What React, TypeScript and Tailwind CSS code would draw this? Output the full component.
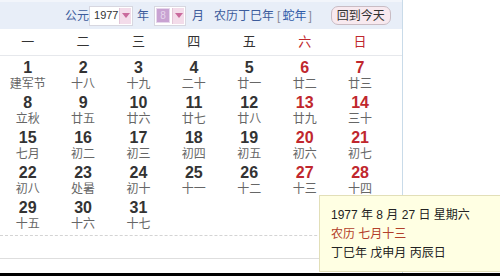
import React from "react";

const font = { fontFamily: '"Liberation Sans", "Noto Sans CJK SC", sans-serif' };

type Day = { d: number; l: string };
const rows: (Day | null)[][] = [
  [
    { d: 1, l: "建军节" },
    { d: 2, l: "十八" },
    { d: 3, l: "十九" },
    { d: 4, l: "二十" },
    { d: 5, l: "廿一" },
    { d: 6, l: "廿二" },
    { d: 7, l: "廿三" },
  ],
  [
    { d: 8, l: "立秋" },
    { d: 9, l: "廿五" },
    { d: 10, l: "廿六" },
    { d: 11, l: "廿七" },
    { d: 12, l: "廿八" },
    { d: 13, l: "廿九" },
    { d: 14, l: "三十" },
  ],
  [
    { d: 15, l: "七月" },
    { d: 16, l: "初二" },
    { d: 17, l: "初三" },
    { d: 18, l: "初四" },
    { d: 19, l: "初五" },
    { d: 20, l: "初六" },
    { d: 21, l: "初七" },
  ],
  [
    { d: 22, l: "初八" },
    { d: 23, l: "处暑" },
    { d: 24, l: "初十" },
    { d: 25, l: "十一" },
    { d: 26, l: "十二" },
    { d: 27, l: "十三" },
    { d: 28, l: "十四" },
  ],
  [
    { d: 29, l: "十五" },
    { d: 30, l: "十六" },
    { d: 31, l: "十七" },
    null,
    null,
    null,
    null,
  ],
];

const weeks = ["一", "二", "三", "四", "五", "六", "日"];

function Arrow() {
  return (
    <div className="w-[12px] h-[16px] bg-[#f3dcea] border-l border-[#e3c6d8] flex items-center justify-center">
      <svg width="8" height="5" viewBox="0 0 8 5">
        <path d="M0 0 L8 0 L4 5 Z" fill="#c96a9c" />
      </svg>
    </div>
  );
}

export default function App() {
  return (
    <div className="relative w-[500px] h-[276px] bg-white overflow-hidden" style={font}>
      <div className="w-[403px] h-[273px] border-r border-[#c9dbe9] flex flex-col">
        {/* header */}
        <div className="h-[29px] bg-[#e8eef8] border-t-2 border-[#f2f5fb] flex items-center pl-[65px] text-[12px] text-[#3d5c9c]">
          <span>公元</span>
          <div className="ml-[0px] w-[44px] h-[20px] bg-white border border-[#d7d7e0] flex items-center justify-between pl-[4px] pr-[1px]">
            <span className="text-[11px] text-[#333]">1977</span>
            <Arrow />
          </div>
          <span className="ml-[4px]">年</span>
          <div className="ml-[5px] w-[32px] h-[20px] bg-white border border-[#d7d7e0] flex items-center justify-between pl-[1px] pr-[1px]">
            <div className="w-[14px] h-[15px] bg-[#c8a2d2] border border-[#e6d6ec] text-[10px] text-[#e6d6ec] leading-[13px] text-center">8</div>
            <Arrow />
          </div>
          <span className="ml-[6px]">月</span>
          <span className="ml-[10px]">农历丁巳年</span>
          <span className="ml-[3px] text-[#8a8a9a]">[</span>
          <span className="ml-[2px] text-[#2f5aa8]">蛇年</span>
          <span className="ml-[2px] text-[#8a8a9a]">]</span>
          <div className="ml-[19px] h-[19px] w-[60px] rounded-[7px] bg-[#f8e9ef] border border-[#c9bcc4] flex items-center justify-center text-[12px] text-[#333]">
            回到今天
          </div>
        </div>
        {/* week row */}
        <div className="h-[27px] bg-white border-b border-[#e6e8ec] grid grid-cols-[repeat(7,55.4px)] items-center">
          {weeks.map((w, i) => (
            <div key={w} className={`text-center text-[13px] ${i >= 5 ? "text-[#c0272d]" : "text-[#333]"}`}>
              {w}
            </div>
          ))}
        </div>
        {/* days */}
        <div className="flex flex-col">
          {rows.map((r, ri) => (
            <div key={ri} className="h-[35px] grid grid-cols-[repeat(7,55.4px)]">
              {r.map((c, ci) => (
                <div key={ci} className="flex flex-col items-center pt-[3px]">
                  {c && (
                    <>
                      <span
                        className={`text-[16px] font-bold leading-[18px] ${ci >= 5 ? "text-[#c0272d]" : "text-[#333]"}`}
                      >
                        {c.d}
                      </span>
                      <span className="text-[12px] leading-[14px] text-[#666]">{c.l}</span>
                    </>
                  )}
                </div>
              ))}
            </div>
          ))}
        </div>
        <div className="mt-[4px] border-t border-dashed border-[#d4d4d4]" />
        <div className="mt-[22px] border-t border-[#dedede]" />
      </div>
      <div className="absolute left-0 right-0 bottom-0 h-[3px] bg-black" />
      {/* tooltip */}
      <div className="absolute left-[319px] top-[195px] w-[200px] h-[77px] bg-[#ffffe3] border border-[#e2dfb8] pl-[11px] pt-[10px] text-[12px] leading-[19px] text-[#222]">
        <div>1977 年 8 月 27 日 星期六</div>
        <div className="text-[#b3402a]">农历 七月十三</div>
        <div>丁巳年 戊申月 丙辰日</div>
      </div>
    </div>
  );
}
